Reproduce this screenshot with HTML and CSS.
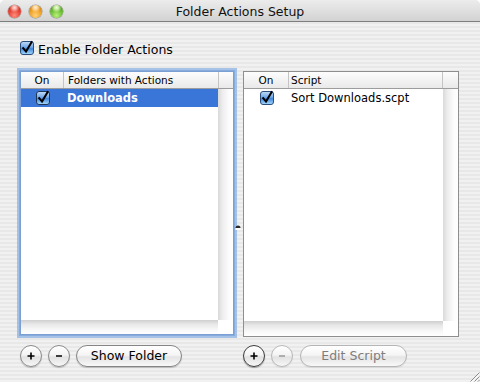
FILE: index.html
```html
<!DOCTYPE html>
<html>
<head>
<meta charset="utf-8">
<title>Folder Actions Setup</title>
<link rel="stylesheet" href="styles.css">
</head>
<body>
<div class="window">
  <header class="titlebar">
    <div class="lights">
      <span class="light red"></span>
      <span class="light yellow"></span>
      <span class="light green"></span>
    </div>
    <div class="title">Folder Actions Setup</div>
    <div></div>
  </header>

  <main class="content">
    <label class="enable">
      <svg class="cb" width="14" height="14" viewBox="0 0 14 14">
        <defs><linearGradient id="cbg1" x1="0" y1="0" x2="0" y2="1"><stop offset="0" stop-color="#c3defa"/><stop offset="0.45" stop-color="#6fa7e6"/><stop offset="0.55" stop-color="#3f86dc"/><stop offset="1" stop-color="#a9dcfc"/></linearGradient></defs>
        <rect x="0.5" y="0.5" width="13" height="13" rx="2.5" fill="url(#cbg1)" stroke="#2b4d7c"/>
        <path d="M3.2 7.2 L6 10.6 L11.6 1" stroke="#000" stroke-width="2" fill="none" stroke-linecap="square"/>
      </svg>
      <span>Enable Folder Actions</span>
    </label>

    <div class="panes">
      <section class="pane pane-left">
        <div class="table table-left focused">
          <div class="thead">
            <div class="th th-on">On</div>
            <div class="th th-name">Folders with Actions</div>
            <div class="th th-scroll"></div>
          </div>
          <div class="tbody">
            <div class="rows">
              <div class="row selected">
                <div class="cell cell-on">
                  <svg class="cb" width="14" height="14" viewBox="0 0 14 14">
                    <defs><linearGradient id="cbg2" x1="0" y1="0" x2="0" y2="1"><stop offset="0" stop-color="#c3defa"/><stop offset="0.45" stop-color="#6fa7e6"/><stop offset="0.55" stop-color="#3f86dc"/><stop offset="1" stop-color="#a9dcfc"/></linearGradient></defs>
                    <rect x="0.5" y="0.5" width="13" height="13" rx="2.5" fill="url(#cbg2)" stroke="#1f3556"/>
                    <path d="M3.2 7.2 L6 10.6 L11.6 1" stroke="#000" stroke-width="2" fill="none" stroke-linecap="square"/>
                  </svg>
                </div>
                <div class="cell cell-name bold">Downloads</div>
              </div>
            </div>
            <div class="vscroll"></div>
          </div>
          <div class="hscroll"><div class="htrack"></div><div class="corner"></div></div>
        </div>
        <div class="buttons">
          <button class="circle" type="button"><svg width="22" height="22" viewBox="0 0 22 22"><path d="M7.5 11 H14.5 M11 7.5 V14.5" stroke="#000" stroke-width="1.6"/></svg></button>
          <button class="circle" type="button"><svg width="22" height="22" viewBox="0 0 22 22"><path d="M8 11 H14" stroke="#000" stroke-width="1.6"/></svg></button>
          <button class="pill pill-show" type="button">Show Folder</button>
        </div>
      </section>

      <div class="splitter"><svg class="grip" width="6" height="6" viewBox="0 0 6 6"><path d="M0.5 4 A2.5 2.5 0 0 1 5.5 4 Z" fill="#2a2a2a"/><rect x="0.5" y="4" width="5" height="2" fill="#fff"/></svg></div>

      <section class="pane pane-right">
        <div class="table table-right">
          <div class="thead">
            <div class="th th-on">On</div>
            <div class="th th-name">Script</div>
            <div class="th th-scroll"></div>
          </div>
          <div class="tbody">
            <div class="rows">
              <div class="row">
                <div class="cell cell-on">
                  <svg class="cb" width="14" height="14" viewBox="0 0 14 14">
                    <defs><linearGradient id="cbg3" x1="0" y1="0" x2="0" y2="1"><stop offset="0" stop-color="#c3defa"/><stop offset="0.45" stop-color="#6fa7e6"/><stop offset="0.55" stop-color="#3f86dc"/><stop offset="1" stop-color="#a9dcfc"/></linearGradient></defs>
                    <rect x="0.5" y="0.5" width="13" height="13" rx="2.5" fill="url(#cbg3)" stroke="#2b4d7c"/>
                    <path d="M3.2 7.2 L6 10.6 L11.6 1" stroke="#000" stroke-width="2" fill="none" stroke-linecap="square"/>
                  </svg>
                </div>
                <div class="cell cell-name">Sort Downloads.scpt</div>
              </div>
            </div>
            <div class="vscroll"></div>
          </div>
          <div class="hscroll"><div class="htrack"></div><div class="corner"></div></div>
        </div>
        <div class="buttons">
          <button class="circle circle-dark" type="button"><svg width="22" height="22" viewBox="0 0 22 22"><path d="M7.5 11 H14.5 M11 7.5 V14.5" stroke="#000" stroke-width="1.6"/></svg></button>
          <button class="circle disabled" type="button"><svg width="22" height="22" viewBox="0 0 22 22"><path d="M8 11 H14" stroke="#9a9a9a" stroke-width="1.6"/></svg></button>
          <button class="pill pill-edit disabled" type="button">Edit Script</button>
        </div>
      </section>
    </div>
  </main>

  <svg class="grow" width="12" height="12" viewBox="0 0 12 12">
    <path d="M11.5 2.5 L2.5 11.5 M11.5 6.5 L6.5 11.5 M11.5 10 L10 11.5" stroke="#8c8c8c" stroke-width="1"/>
    <path d="M12 3.5 L3.5 12 M12 7.5 L7.5 12" stroke="#ffffff" stroke-width="1"/>
  </svg>
</div>
</body>
</html>
```

FILE: styles.css
```css
html, body {
  margin: 0;
  padding: 0;
  background: #ffffff;
}

body {
  width: 480px;
  height: 382px;
  overflow: hidden;
  font-family: "DejaVu Sans", "Liberation Sans", sans-serif;
  color: #000;
}

.window {
  position: relative;
  width: 480px;
  height: 382px;
  border-radius: 5px 5px 0 0;
  overflow: hidden;
  background: repeating-linear-gradient(to bottom, #f1f1f1 0, #f1f1f1 2px, #e8e8e8 2px, #e8e8e8 4px);
}

/* Title bar */
.titlebar {
  height: 21px;
  border-bottom: 1px solid #7e7e7e;
  display: grid;
  grid-template-columns: 1fr auto 1fr;
  align-items: center;
  background: linear-gradient(to bottom, #ececec 0%, #e2e2e2 40%, #d2d2d2 100%);
}

.lights {
  display: flex;
  gap: 8px;
  padding-left: 8px;
  padding-top: 1px;
}

.light {
  width: 13px;
  height: 13px;
  border-radius: 50%;
  box-sizing: border-box;
  box-shadow: 0 0 0 0.5px rgba(0,0,0,0.35);
}

.red {
  background: radial-gradient(circle at 50% 20%, #ffe0dc 0, #f7a49a 18%, rgba(230,70,60,0) 40%),
              radial-gradient(circle at 50% 80%, #ff8f7a 0, #e8473a 45%, #b2221a 100%);
}

.yellow {
  background: radial-gradient(circle at 50% 20%, #fff3d8 0, #fbd191 18%, rgba(240,160,40,0) 40%),
              radial-gradient(circle at 50% 80%, #ffd27a 0, #f0a42a 45%, #b96f0c 100%);
}

.green {
  background: radial-gradient(circle at 50% 20%, #effde0 0, #c5ea9e 18%, rgba(110,190,50,0) 40%),
              radial-gradient(circle at 50% 80%, #b9f07a 0, #72c23a 45%, #3d8418 100%);
}

.title {
  font-size: 12.5px;
  line-height: 21px;
  color: #111;
  padding-top: 1px;
}

/* Content */
.content {
  display: flex;
  flex-direction: column;
}

.enable {
  display: flex;
  align-items: center;
  gap: 4px;
  height: 14px;
  margin-top: 19px;
  padding-left: 20px;
  font-size: 12.5px;
}

.enable span {
  padding-top: 2px;
}

.cb {
  display: block;
  flex: none;
  overflow: visible;
}

.panes {
  display: flex;
  margin-top: 16px;
  padding-left: 20px;
}

.pane {
  display: flex;
  flex-direction: column;
  height: 296px;
}

.pane-left { width: 214px; }
.pane-right { width: 216px; }

.splitter {
  width: 9px;
  display: flex;
  justify-content: center;
  padding-top: 153px;
  box-sizing: border-box;
}

.grip {
  display: block;
  margin-left: -2px;
}

/* Tables */
.table {
  box-sizing: border-box;
  border: 1px solid #8e8e8e;
  background: #fff;
  display: flex;
  flex-direction: column;
}

.table-left {
  height: 264px;
  border-color: #7b9fd2;
}

.table-right {
  height: 266px;
}

.focused {
  box-shadow: 0 0 0 1px #86acdd, 0 0 0 3px rgba(140, 178, 226, 0.75);
}

.thead {
  display: grid;
  height: 17px;
  box-sizing: border-box;
  border-bottom: 1px solid #9c9c9c;
  background: linear-gradient(to bottom, #fdfdfd 0%, #f3f3f3 50%, #e9e9e9 100%);
  font-size: 10.5px;
}

.table-left .thead { grid-template-columns: 43px 155px 14px; }
.table-right .thead { grid-template-columns: 45px 154px 15px; }

.th {
  box-sizing: border-box;
  border-right: 1px solid #c4c4c4;
  line-height: 16px;
  white-space: nowrap;
  overflow: hidden;
}

.th-on { text-align: center; }
.th-name { padding-left: 4px; }
.table-right .th-name { padding-left: 2px; }
.th-scroll { border-right: none; }

.tbody {
  flex: 1;
  display: flex;
  min-height: 0;
}

.rows {
  flex: 1;
}

.row {
  display: grid;
  height: 18px;
  align-items: center;
  font-size: 11.5px;
}

.table-left .row { grid-template-columns: 43px 1fr; }
.table-right .row { grid-template-columns: 45px 1fr; }

.row.selected {
  background: #3a75d8;
  color: #fff;
}

.cell-on {
  display: flex;
  justify-content: center;
  padding-left: 1px;
}

.cell-name {
  padding-left: 3px;
  white-space: nowrap;
}

.table-right .cell-name { padding-left: 2px; }

.bold { font-weight: bold; }

.vscroll {
  flex: none;
  background: linear-gradient(to right, #d9d9d9 0%, #ededed 30%, #fbfbfb 70%, #ffffff 100%);
}

.table-left .vscroll { width: 15px; }
.table-right .vscroll { width: 15px; }

.hscroll {
  display: flex;
  height: 14px;
  flex: none;
}

.table-right .hscroll { height: 15px; }

.htrack {
  flex: 1;
  background: linear-gradient(to bottom, #cfcfcf 0%, #e8e8e8 30%, #f8f8f8 70%, #ffffff 100%);
}

.corner {
  width: 15px;
  background: #fff;
}

/* Buttons */
.buttons {
  margin-top: auto;
  display: flex;
  gap: 6px;
  height: 22px;
}

button {
  font-family: inherit;
  margin: 0;
  padding: 0;
  cursor: default;
}

.circle {
  width: 22px;
  height: 22px;
  border-radius: 50%;
  box-sizing: border-box;
  border: 1px solid #8a8a8a;
  background: linear-gradient(to bottom, #ffffff 0%, #f4f4f4 45%, #e2e2e2 55%, #f7f7f7 100%);
  box-shadow: 0 1px 1px rgba(0,0,0,0.2);
  display: flex;
  align-items: center;
  justify-content: center;
}

.circle svg {
  display: block;
  margin: -1px;
}

.circle-dark {
  border-color: #3c3c3c;
  box-shadow: 0 1px 1px rgba(0,0,0,0.35);
}

.circle.disabled {
  border-color: #b8b8b8;
  box-shadow: 0 1px 1px rgba(0,0,0,0.08);
}

.pill {
  height: 22px;
  box-sizing: border-box;
  border-radius: 11px;
  border: 1px solid #858585;
  background: linear-gradient(to bottom, #ffffff 0%, #f5f5f5 45%, #e4e4e4 55%, #f8f8f8 100%);
  box-shadow: 0 1px 1px rgba(0,0,0,0.2);
  font-size: 12.5px;
  color: #000;
  line-height: 20px;
}

.pill-show { width: 106px; }
.pill-edit { width: 107px; margin-left: 1px; }

.pill.disabled {
  color: #7d7d7d;
  border-color: #b5b5b5;
  box-shadow: 0 1px 1px rgba(0,0,0,0.08);
}

.grow {
  position: absolute;
  right: 0;
  bottom: 0;
  display: block;
}
```
